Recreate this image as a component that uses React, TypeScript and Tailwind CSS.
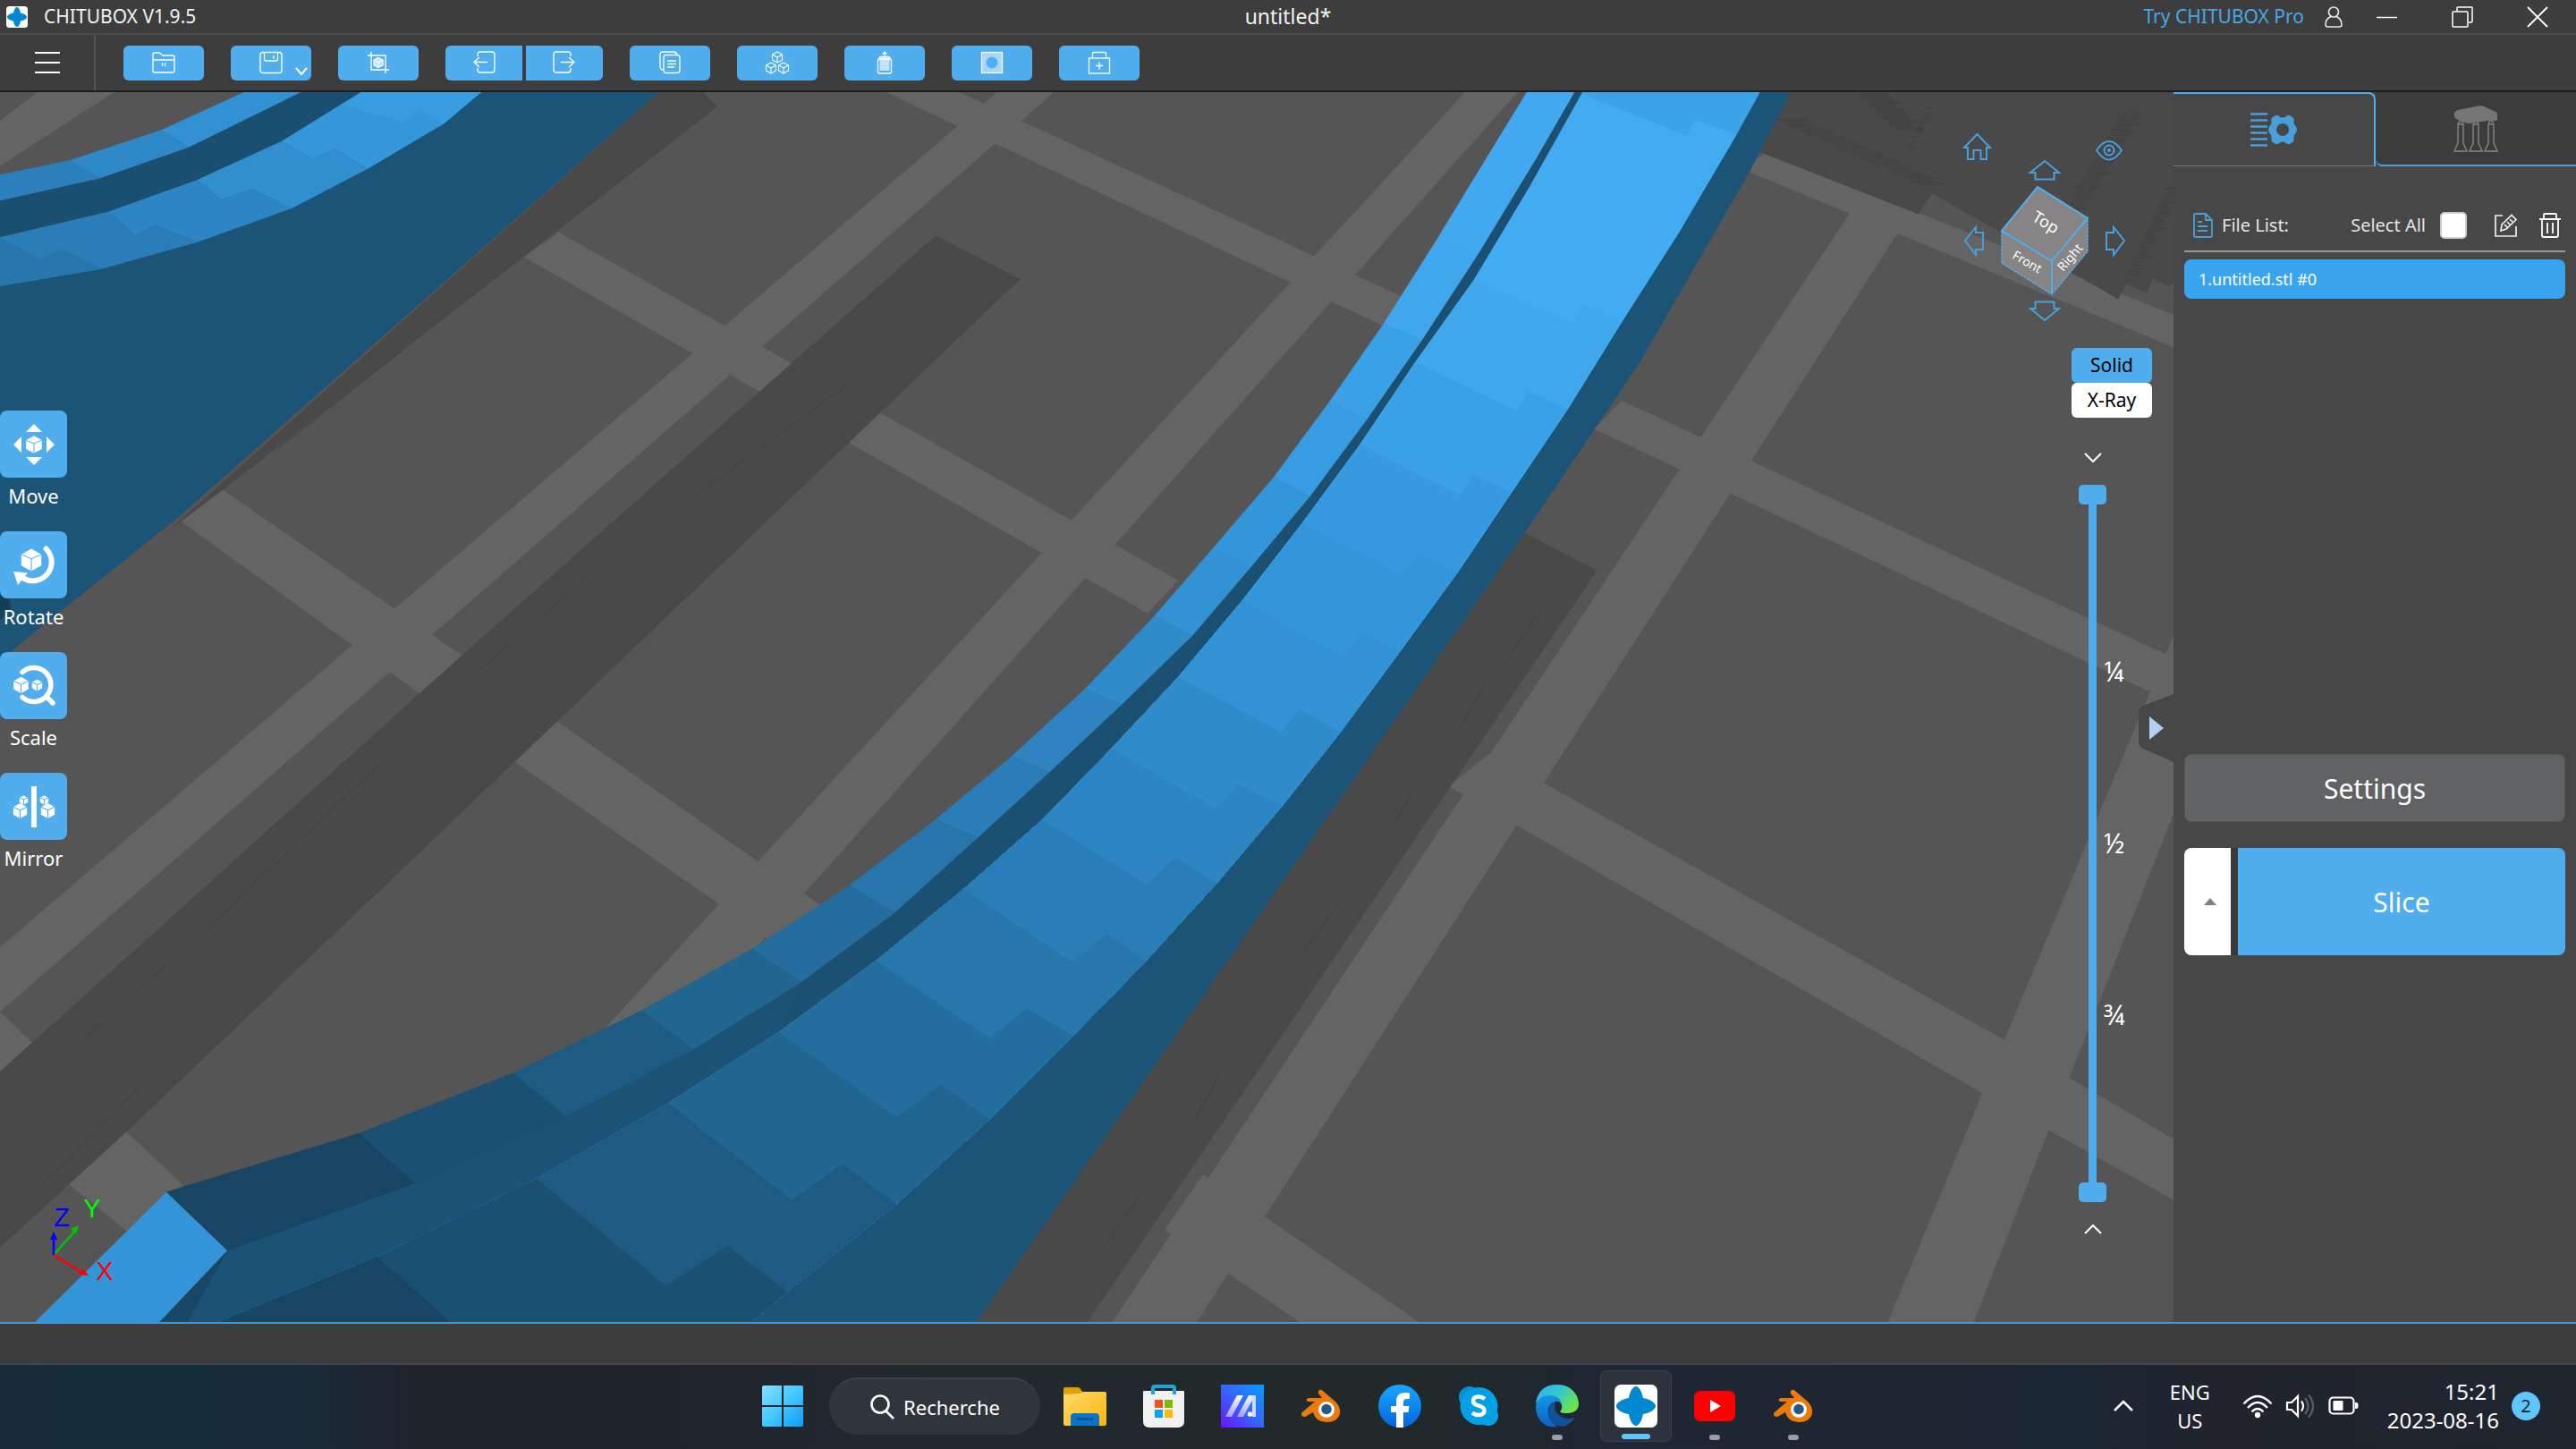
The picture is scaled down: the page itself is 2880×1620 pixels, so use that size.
import React from "react";

type Pt = [number, number];
const pts = (list: Pt[]) => list.map((p) => p.join(",")).join(" ");

/* ---------- 3D scene ---------- */

const floorStrips: Pt[][] = [
  [[30, 0], [86, 0], [0, 97], [0, 40]],
  [[722, 0], [763, 0], [0, 1165], [0, 1083]],
  [[1059, 0], [1097, 0], [437, 1297], [383, 1287]],
  [[1394, 0], [1436, 0], [862, 1560], [801, 1560]],
  [[1568, 690], [1568, 915], [1493, 1247], [1423, 1560], [1361, 1560], [1446, 1200]],
  [[0, 1165], [133, 1385], [133, 1500], [48, 1380], [0, 1310]],
  [[160, 505], [402, 798], [592, 1030], [560, 1080], [520, 1030], [372, 850], [255, 703], [130, 545]],
  [[403, 181], [850, 620], [828, 662], [378, 212]],
  [[687, 0], [1025, 273], [1010, 309], [634, 0]],
  [[1275, 80], [1568, 285], [1568, 326], [1255, 100]],
  [[1170, 393], [1568, 718], [1568, 775], [1150, 429]],
  [[1075, 838], [1446, 1200], [1568, 1325], [1568, 1402], [1430, 1267], [1045, 880]],
  [[868, 1370], [1027, 1560], [941, 1560], [840, 1440]],
];

const shadows: Pt[][] = [
  [[478, 0], [505, 0], [518, 22], [165, 500], [120, 560]],
  [[675, 185], [736, 240], [402, 798], [95, 1310], [0, 1462], [0, 1240], [333, 715]],
  [[1100, 560], [1152, 608], [783, 1560], [700, 1560]],
  [[1290, 0], [1568, 0], [1568, 245], [1565, 249], [1553, 240], [1549, 258], [1534, 246], [1528, 265], [1394, 132], [1384, 158], [1270, 80]],
];

const sideFace: Pt[] = [[1268, 0], [1293, 0], [1262, 105], [1183, 345], [1100, 560], [703, 1560], [500, 1560]];

const outerLeft: Pt[] = [
  [1103, 0], [1075, 80], [1037, 189], [998, 297], [959, 395], [919, 490], [875, 580], [833, 665],
  [783, 757], [730, 842], [675, 922], [613, 1005], [543, 1085], [463, 1163], [370, 1242], [259, 1318], [120, 1392],
];
const outerRight: Pt[] = [
  [1137, 0], [1109, 85], [1066, 209], [1026, 316], [986, 417], [945, 514], [902, 604], [860, 690],
  [809, 777], [757, 862], [705, 945], [645, 1040], [578, 1127], [500, 1212], [408, 1296], [299, 1381], [164, 1466],
];
const outerColors = [
  "#42a9f0", "#42a9f0", "#40a7ed", "#3aa1e6", "#379ce1", "#3496da", "#3292d3",
  "#2f8bca", "#2d84c0", "#2a7db6", "#2775aa", "#246d9e", "#216591", "#1e5b83", "#1b5072", "#184563",
];

const innerLeft: Pt[] = [
  [1143, 0], [1103, 125], [1063, 242], [1021, 345], [981, 449], [939, 549], [896, 646], [850, 742], [802, 832], [752, 922],
  [695, 1010], [632, 1100], [562, 1190], [482, 1280], [387, 1375], [272, 1474], [152, 1560],
];
const innerRight: Pt[] = [
  [1271, 0], [1253, 57], [1212, 179], [1170, 294], [1131, 404], [1091, 508], [1052, 609], [1010, 710], [967, 812],
  [925, 905], [878, 1002], [827, 1100], [774, 1195], [714, 1300], [647, 1407], [568, 1518], [540, 1560],
];
const treads: { edge: Pt[]; fill: string }[] = [
  { edge: [[1141, 6], [1217, 59], [1223, 39], [1253, 57]], fill: "#42aaf1" },
  { edge: [[1103, 125], [1173, 180], [1181, 160], [1212, 179]], fill: "#43abf2" },
  { edge: [[1063, 242], [1135, 296], [1142, 272], [1170, 294]], fill: "#40a7ed" },
  { edge: [[1021, 345], [1094, 406], [1102, 382], [1131, 404]], fill: "#3aa1e6" },
  { edge: [[981, 449], [1053, 512], [1063, 487], [1091, 508]], fill: "#379ae0" },
  { edge: [[939, 549], [1011, 613], [1023, 587], [1052, 609]], fill: "#3496da" },
  { edge: [[896, 646], [968, 716], [983, 684], [1010, 710]], fill: "#3292d3" },
  { edge: [[850, 742], [924, 812], [938, 783], [967, 812]], fill: "#2f8bca" },
  { edge: [[802, 832], [877, 908], [893, 877], [925, 905]], fill: "#2d85c2" },
  { edge: [[752, 922], [827, 1004], [848, 970], [878, 1002]], fill: "#2a7eb8" },
  { edge: [[695, 1010], [773, 1102], [799, 1067], [827, 1100]], fill: "#2777ad" },
  { edge: [[632, 1100], [714, 1198], [741, 1160], [774, 1195]], fill: "#246e9f" },
  { edge: [[562, 1190], [647, 1298], [679, 1256], [714, 1300]], fill: "#216591" },
  { edge: [[482, 1280], [571, 1402], [608, 1357], [647, 1407]], fill: "#1e5a82" },
  { edge: [[387, 1375], [480, 1510], [525, 1460], [568, 1518]], fill: "#1b5071" },
];

/* Rows of short strokes that make up the hatched shadow edges. */
const hatches = [
  { x: 1279, y: 38, dx: 3.1, dy: 2.5, n: 34, w: 24 },
  { x: 1341, y: 6, dx: 1.1, dy: 2, n: 24, w: 22 },
  { x: 1388, y: 24, dx: -0.8, dy: 3, n: 18, w: 7 },
  { x: 1530, y: 30, dx: -0.9, dy: 2.6, n: 48, w: 17 },
  { x: 1562, y: 125, dx: -0.8, dy: 3, n: 38, w: 12 },
];

function Scene() {
  return (
    <svg className="absolute inset-0 h-full w-full" viewBox="0 4 1568 1552" preserveAspectRatio="none" aria-hidden="true">
      <defs>
        <clipPath id="inner">
          <polygon points={pts([...innerLeft, ...[...innerRight].reverse()])} />
        </clipPath>
      </defs>
      <rect x="0" y="0" width="1568" height="1560" fill="#555555" />
      {floorStrips.map((s, i) => (
        <polygon key={i} points={pts(s)} fill="#646464" />
      ))}
      {shadows.map((s, i) => (
        <polygon key={i} points={pts(s)} fill="#494949" />
      ))}
      <g stroke="#424242" strokeWidth=".7" fill="none">
        <path d="M610 375L500 515M430 605L345 735M275 850L150 1060M130 1090L50 1215M100 1260L30 1385" />
        <path d="M1112 655L1085 725M1072 750L1050 815M1020 885L1005 930M965 1030L940 1090M880 1245L862 1300M825 1390L795 1465" />
        <path d="M290 330L200 455" />
      </g>
      <g stroke="#424242" strokeWidth="1.200">
        {hatches.flatMap((h, k) =>
          Array.from({ length: h.n }, (_, i) => (
            <path key={`${k}-${i}`} d={`M${h.x + i * h.dx + ((i * 7) % 4)} ${h.y + i * h.dy}h${h.w - ((i * 5) % 6)}`} />
          ))
        )}
      </g>

      {/* far ribbon */}
      <polygon points="0,180 0,722 24,687 129,540 478,0 250,0" fill="#1c5477" />
      <polygon points="0,635 6,640 8,655 0,670" fill="#163f5b" />
      <polygon points="0,108 50,90 72,113 0,141" fill="#2b80bb" />
      <polygon points="50,90 116,52 136,74 72,113" fill="#2e88c7" />
      <polygon points="116,52 181,0 222,0 136,74" fill="#3291d2" />
      <polygon points="0,141 72,113 136,74 222,0 264,0 203,66 142,115 78,155 0,187" fill="#1b4f71" />
      <polygon points="0,187 78,155 98,185 112,172 143,193 74,227 0,249" fill="#2a7db6" />
      <polygon points="0,187 28,215 45,202 74,227 0,249" fill="#2876ab" />
      <polygon points="78,155 142,115 160,140 182,126 210,151 143,193 112,172 98,185" fill="#2d86c3" />
      <polygon points="142,115 203,66 225,88 242,76 265,101 210,151 182,126 160,140" fill="#318fd0" />
      <polygon points="203,66 264,0 350,0 320,44 265,101 242,76 225,88" fill="#3597da" />
      <polygon points="248,20 264,0 350,0 320,44 303,24 290,42" fill="#389ce1" />

      {/* near ribbon */}
      <polygon points={pts(sideFace)} fill="#1c5478" />
      <polygon
        points={pts([...outerRight, [115, 1560], [152, 1560], ...[...innerLeft].reverse()])}
        fill="#1b5072"
      />
      <polygon points="164,1466 299,1381 408,1296 500,1212 578,1127 562,1190 482,1280 387,1375 272,1474 152,1560 132,1560" fill="#1c5276" />
      {outerLeft.slice(0, -1).map((p, i) => (
        <polygon
          key={i}
          points={pts([p, outerRight[i], outerRight[i + 1], outerLeft[i + 1]])}
          fill={outerColors[i]}
          stroke={outerColors[i]}
          strokeWidth="0.5"
        />
      ))}
      <g clipPath="url(#inner)">
        <rect width="1568" height="1560" fill="#3ca3e8" />
        {treads.map(({ edge, fill }, i) => (
          <polygon
            key={i}
            points={pts([[0, edge[0][1]], ...edge, [1568, edge[3][1]], [1568, 1560], [0, 1560]])}
            fill={fill}
          />
        ))}
        <polygon points="272,1474 328,1560 100,1560 100,1474" fill="#184564" />
      </g>
      <polygon points="23,1560 120,1392 164,1466 113,1560" fill="#3394d8" />
      <polygon points="113,1560 164,1466 134,1560" fill="#184664" />
    </svg>
  );
}

/* ---------- small icons ---------- */

function Brand({ className }: { className?: string }) {
  return (
    <svg viewBox="0 0 48 48" className={className} aria-hidden="true">
      <rect width="48" height="48" rx="7" fill="#fff" />
      <path d="M24 2c4 0 7 7 8 13 7 1 14 5 14 9s-7 8-14 9c-1 6-4 13-8 13s-7-7-8-13C9 32 2 28 2 24s7-8 14-9c1-6 4-13 8-13z" fill="#0288d1" />
    </svg>
  );
}

function Cube({ x, y, s, line = "#50aeee" }: { x: number; y: number; s: number; line?: string }) {
  return (
    <g transform={`translate(${x} ${y}) scale(${s})`}>
      <path d="M0-10L9-5V5L0 10L-9 5V-5Z" fill="#fff" />
      <path d="M-9-5L0-1L9-5M0-1V10" stroke={line} strokeWidth={1 / s} fill="none" />
    </g>
  );
}

function WireCube({ x, y }: { x: number; y: number }) {
  return <path transform={`translate(${x} ${y})`} d="M0-6L5.500-3V3L0 6L-5.500 3V-3ZM-5.500-3L0 0L5.500-3M0 0V6" />;
}

const line = { fill: "none", stroke: "#fff", strokeWidth: 1.3 } as const;

const toolIcons: Record<string, React.ReactNode> = {
  Open: (
    <g {...line}>
      <path d="M4 27V7q0-2 2-2h5l4 3h11q2 0 2 2v15q0 2-2 2H6q-2 0-2-2zM4 13h24M14.500 16v4M17.500 16v4" />
    </g>
  ),
  Save: (
    <g {...line}>
      <rect x="4" y="4.500" width="24" height="23" rx="3" />
      <path d="M8.500 5v7q0 2 2 2h11q2 0 2-2V5M19 8v4" />
    </g>
  ),
  Layout: (
    <g {...line}>
      <path d="M4 8h20v20M8 4v20h20" />
      <path d="M16 10.500l5 2.700v5.600l-5 2.700-5-2.700v-5.600z" fill="#fff" fillOpacity=".65" />
      <path d="M11 13.200l5 2.700 5-2.700M16 16v5" strokeWidth=".8" />
    </g>
  ),
  Undo: (
    <g {...line}>
      <path d="M9 9V7q0-3 3-3h13q3 0 3 3v17q0 3-3 3H12q-3 0-3-3v-2M20 15.500H5M11 10l-6 5.500 6 5.500" />
    </g>
  ),
  Redo: (
    <g {...line}>
      <path d="M23 9V7q0-3-3-3H7Q4 4 4 7v17q0 3 3 3h13q3 0 3-3v-2M12 15.500h15M21 10l6 5.500-6 5.500" />
    </g>
  ),
  Clone: (
    <g {...line}>
      <rect x="9" y="7.500" width="18" height="20" rx="3" />
      <path d="M9 24q-4 0-4-4V7q0-3 3-3h12q3 0 4 3M13 14h10M13 17.500h10M13 21h8" />
    </g>
  ),
  Arrange: (
    <g {...line} strokeWidth={1.1}>
      <WireCube x={16} y={10} />
      <WireCube x={9} y={22} />
      <WireCube x={23} y={22} />
    </g>
  ),
  Hollow: (
    <g {...line}>
      <rect x="8.500" y="12" width="15" height="16" rx="2" />
      <rect x="10.500" y="10" width="11" height="15" fill="#fff" fillOpacity=".65" stroke="none" />
      <path d="M10 12q0-2.500 2-2.500h8q2 0 2 2.500M16 10V4M13.500 6.500L16 4l2.500 2.500" />
    </g>
  ),
  Dig: (
    <g>
      <rect x="4.500" y="4.500" width="23" height="23" fill="#fff" fillOpacity=".5" stroke="#fff" strokeWidth="1.300" />
      <circle cx="16" cy="16" r="6.500" fill="#50aeee" />
    </g>
  ),
  Repair: (
    <g {...line}>
      <rect x="4.500" y="11" width="23" height="17" />
      <path d="M8.500 11V5.500q0-1 1-1h13q1 0 1 1V11M16 15.500v8M12 19.500h8" />
    </g>
  ),
};

function ToolIcon({ name }: { name: string }) {
  return (
    <svg viewBox="0 0 32 32" className="size-8" aria-hidden="true">
      {toolIcons[name]}
    </svg>
  );
}

const toolButton = "relative flex h-[39px] items-center justify-center bg-[#50aeee]";

function Toolbar() {
  return (
    <div className="flex h-16 items-stretch bg-[#3d3d3d] border-b-2 border-[#1d1d1f]">
      <button aria-label="Menu" className="flex w-[107px] items-center justify-center border-r-2 border-[#555]">
        <svg viewBox="0 0 28 26" className="h-[26px] w-7" aria-hidden="true">
          <path d="M0 2h28M0 13h28M0 24h28" stroke="#fff" strokeWidth="2" />
        </svg>
      </button>
      <div className="flex items-center gap-[30px] pl-[31px]">
        {["Open", "Save", "Layout"].map((n) => (
          <button key={n} aria-label={n} className={`${toolButton} w-[90px] rounded-md`}>
            <ToolIcon name={n} />
            {n === "Save" && (
              <svg viewBox="0 0 14 9" className="absolute right-1 bottom-1.5 h-[9px] w-3.5" aria-hidden="true">
                <path d="M1 1l6 7 6-7" fill="none" stroke="#fff" strokeWidth="2" />
              </svg>
            )}
          </button>
        ))}
        <div className="flex gap-1">
          <button aria-label="Undo" className={`${toolButton} w-[86px] rounded-l-md`}>
            <ToolIcon name="Undo" />
          </button>
          <button aria-label="Redo" className={`${toolButton} w-[86px] rounded-r-md`}>
            <ToolIcon name="Redo" />
          </button>
        </div>
        {["Clone", "Arrange", "Hollow", "Dig", "Repair"].map((n) => (
          <button key={n} aria-label={n} className={`${toolButton} w-[90px] rounded-md`}>
            <ToolIcon name={n} />
          </button>
        ))}
      </div>
    </div>
  );
}

function TitleBar() {
  return (
    <header className="grid h-[39px] grid-cols-[1fr_auto_1fr] items-center border-b-2 border-[#4a4a4a] bg-[#3d3d3d] text-[21px] text-[#f2f2f2]">
      <div className="flex items-center gap-[18px] pl-[7px]">
        <Brand className="size-6" />
        <span>CHITUBOX V1.9.5</span>
      </div>
      <h1 className="text-[23px]">untitled*</h1>
      <div className="flex items-center justify-end pr-[31px]">
        <a href="#pro" className="text-[#4ba6e4]">Try CHITUBOX Pro</a>
        <button aria-label="Account" className="ml-[22px]">
          <svg viewBox="0 0 22 24" className="h-6 w-[22px]" fill="none" stroke="#e8e8e8" strokeWidth="1.600" aria-hidden="true">
            <ellipse cx="11" cy="6.500" rx="5.500" ry="5.500" />
            <path d="M8 11.500q-6 2.500-6 9 0 2.500 2.500 2.500h13q2.500 0 2.500-2.500 0-6.500-6-9" />
          </svg>
        </button>
        <button aria-label="Minimize" className="ml-[37px]">
          <svg viewBox="0 0 24 24" className="size-6" aria-hidden="true">
            <path d="M0 12.500h23" stroke="#fff" strokeWidth="1.500" />
          </svg>
        </button>
        <button aria-label="Restore" className="ml-[60px]">
          <svg viewBox="0 0 24 24" className="size-6" fill="none" stroke="#fff" strokeWidth="1.500" aria-hidden="true">
            <rect x="1" y="6" width="17" height="17" rx="1" />
            <path d="M6 5.500V2q0-1 1-1h15q1 0 1 1v15q0 1-1 1h-3" />
          </svg>
        </button>
        <button aria-label="Close" className="ml-[60px]">
          <svg viewBox="0 0 24 24" className="size-6" aria-hidden="true">
            <path d="M1 1l22 22M23 1L1 23" stroke="#fff" strokeWidth="1.800" />
          </svg>
        </button>
      </div>
    </header>
  );
}

/* ---------- viewport overlays ---------- */

const transforms: { name: string; icon: React.ReactNode }[] = [
  {
    name: "Move",
    icon: (
      <>
        <path d="M38 15l9 9H29zM38 61l9-9H29zM15 38l9-9v18zM61 38l-9-9v18z" fill="#fff" />
        <Cube x={38} y={38} s={0.98} />
      </>
    ),
  },
  {
    name: "Rotate",
    icon: (
      <>
        <path d="M51.500 19.500A21 21 0 0 1 27 53" fill="none" stroke="#fff" strokeWidth="6" strokeLinecap="round" />
        <path d="M15 45l16 1.500-11 13.500z" fill="#fff" />
        <Cube x={35} y={32} s={1.25} />
      </>
    ),
  },
  {
    name: "Scale",
    icon: (
      <>
        <path d="M25 22.500A19 19 0 1 1 25 50.500M52 50l7 7" fill="none" stroke="#fff" strokeWidth="5.500" strokeLinecap="round" />
        <Cube x={23.500} y={37} s={0.92} />
        <Cube x={41.500} y={37} s={0.64} />
      </>
    ),
  },
  {
    name: "Mirror",
    icon: (
      <>
        <rect x="35" y="15" width="6" height="46" fill="#fff" />
        <Cube x={26.500} y={30.500} s={0.52} />
        <Cube x={49.500} y={30.500} s={0.52} />
        <Cube x={22.500} y={42.500} s={0.85} />
        <Cube x={53.500} y={42.500} s={0.85} />
      </>
    ),
  },
];

function TransformTools() {
  return (
    <nav aria-label="Transform" className="absolute top-[356px] left-0 flex flex-col">
      {transforms.map(({ name, icon }) => (
        <button key={name} className="flex h-[135px] w-[75px] flex-col items-center gap-1 text-[22px] leading-8 text-white">
          <span className="size-[75px] rounded-lg bg-[#50aeee]">
            <svg viewBox="0 0 75 75" aria-hidden="true">{icon}</svg>
          </span>
          {name}
        </button>
      ))}
    </nav>
  );
}

function ViewCube() {
  return (
    <svg viewBox="2190 140 190 230" className="absolute top-[37px] right-[50px] h-[230px] w-[190px]" role="img" aria-label="View cube">
      <g fill="none" stroke="#4a9fdb" strokeWidth="2">
        <path d="M2196 165l14.500-15 14.500 15h-4v13h-6.500v-10h-8v10h-6.500v-13z" />
        <path d="M2344 168q7-10 14-10t14 10q-7 10.500-14 10.500T2344 168z" />
        <circle cx="2358" cy="168" r="5.500" />
        <circle cx="2358" cy="168" r="1" />
        <path d="M2286 180l16 13h-5.500v7.500h-21V193h-5.500z" />
        <path d="M2286 358l16-13h-5.500v-7.500h-21v7.500h-5.500z" />
        <path d="M2197 269l12-15v6h8v19h-8v6z" />
        <path d="M2375 269l-12-15v6h-8v19h8v6z" />
      </g>
      <path d="M2278 209L2334 244V281L2294 329L2238 294V258Z" fill="#868484" stroke="#50aeee" strokeWidth="1.500" strokeDasharray="3 1" />
      <path d="M2278 209L2334 244L2294 292L2238 258ZM2294 292V329" fill="none" stroke="#50aeee" strokeWidth="2" />
      <g fill="#fff" textAnchor="middle">
        <text fontSize="18" transform="translate(2284 254) rotate(31)">Top</text>
        <text fontSize="14" transform="translate(2264 297) rotate(30)">Front</text>
        <text fontSize="14" transform="translate(2318 291) rotate(-50)">Right</text>
      </g>
    </svg>
  );
}

function Chevron({ up }: { up?: boolean }) {
  return (
    <svg viewBox="0 0 20 12" className="h-3 w-5" aria-hidden="true">
      <path d={up ? "M1 11l9-9 9 9" : "M1 1l9 9 9-9"} fill="none" stroke="#fff" strokeWidth="2" />
    </svg>
  );
}

function LayerSlider() {
  return (
    <div className="absolute top-[403px] right-[54px] bottom-[98px] flex w-[52px] flex-col">
      <button aria-label="Layer down" className="flex w-[31px] justify-center"><Chevron /></button>
      <div className="relative mt-6 mb-6 flex-1">
        <div className="flex h-full w-[31px] flex-col items-center">
          <span className="h-[22px] w-[31px] rounded-[5px] bg-[#50aeee]" />
          <span className="w-[9px] flex-1 bg-[#50aeee]" />
          <span className="h-[22px] w-[31px] rounded-[5px] bg-[#50aeee]" />
        </div>
        <input type="range" aria-label="Upper layer" className="absolute top-0 left-0 h-1/2 w-[31px] opacity-0 [writing-mode:vertical-lr]" />
        <input type="range" aria-label="Lower layer" className="absolute bottom-0 left-0 h-1/2 w-[31px] opacity-0 [writing-mode:vertical-lr]" />
        <div className="pointer-events-none absolute inset-y-0 left-7 flex flex-col justify-center gap-[156px] text-[30px] leading-9 text-white">
          <span>¼</span>
          <span>½</span>
          <span>¾</span>
        </div>
      </div>
      <button aria-label="Layer up" className="flex w-[31px] justify-center"><Chevron up /></button>
    </div>
  );
}

function Axes() {
  return (
    <svg viewBox="40 1330 100 110" className="absolute bottom-[39px] left-10 h-[110px] w-[100px] font-['Liberation_Sans',sans-serif]" role="img" aria-label="Axes">
      <path d="M60 1404L84 1377" stroke="#00c800" strokeWidth="2.500" />
      <path d="M88 1371l-9 4 6 6z" fill="#00c800" />
      <path d="M60 1404V1385" stroke="#0000ff" strokeWidth="2.500" />
      <path d="M60 1378l4 9h-8z" fill="#0000ff" />
      <path d="M60 1404L92 1424" stroke="#ff0000" strokeWidth="2.500" />
      <path d="M99 1427l-11-1 5-7z" fill="#ff0000" />
      <g fontSize="29" textAnchor="middle">
        <text x="69" y="1372" fill="#0000ff">Z</text>
        <text x="103" y="1362" fill="#00ff00">Y</text>
        <text x="117" y="1432" fill="#ff0000">X</text>
      </g>
    </svg>
  );
}

function Viewport() {
  return (
    <main className="relative flex-1 overflow-hidden">
      <Scene />
      <TransformTools />
      <ViewCube />
      <div className="absolute top-[286px] right-6 flex w-[90px] flex-col text-[21px] text-black">
        <button className="h-[39px] rounded-md bg-[#50aeee]">Solid</button>
        <button className="h-[39px] rounded-md bg-white">X-Ray</button>
      </div>
      <LayerSlider />
      <Axes />
      <button aria-label="Collapse panel" className="absolute top-[673px] right-0 h-[76px] w-10">
        <svg viewBox="0 0 40 76" className="h-full w-full" aria-hidden="true">
          <path d="M40 0V76L6 61Q1 58 1 54V20Q1 16 6 13Z" fill="#474747" />
          <path d="M13 25L29 38L13 51Z" fill="#b4cff2" />
        </svg>
      </button>
    </main>
  );
}

/* ---------- right panel ---------- */

function SettingsTabIcon() {
  return (
    <svg viewBox="0 0 52 40" className="h-10 w-[52px]" aria-hidden="true">
      <path d="M0 2.500h19M0 9.500h19M0 16.500h19M0 23.500h19M0 30.500h19M0 37.500h19" stroke="#4a9fdb" strokeWidth="2.500" />
      <path
        fillRule="evenodd"
        fill="#4a9fdb"
        d="M28 4q2-1 4 1 4 3 8 0 2-2 4-1l3 2q2 1 1.500 3.500Q48 14 50.500 16q1.500 2 1.500 4t-1.500 4q-2.500 2-2 6.500Q49 33 47 34l-3 2q-2 1-4-1-4-3-8 0-2 2-4 1l-3-2q-2-1-1.500-3.500Q24 26 21.500 24 20 22 20 20t1.500-4q2.500-2 2-6.500Q23 7 25 6zM36 13a7 7 0 1 0 .1 0z"
      />
    </svg>
  );
}

function SupportTabIcon() {
  return (
    <svg viewBox="0 0 50 52" className="h-[52px] w-[50px]" aria-hidden="true">
      <path d="M1 9q0-3 4-4L30 0q2 0 4 1l13 6q2 1 2 3v5q0 2-3 2l-8 0-20 3q-3 0-5-1L3 15q-2-1-2-3z" fill="#767676" />
      <g fill="none" stroke="#767676" strokeWidth="1.800">
        {[0, 17, 34].map((x) => (
          <path key={x} transform={`translate(${x} 0)`} d="M8 15L5 21V42L1 51H15L11 42V21ZM5 21h6" />
        ))}
      </g>
    </svg>
  );
}

function SidePanel() {
  return (
    <aside className="flex w-[450px] flex-col bg-[#474747]">
      <div role="tablist" className="flex h-[83px]">
        <button role="tab" aria-selected="true" aria-label="Settings" className="flex flex-1 items-center justify-center rounded-tr-lg border-t-2 border-r-2 border-b border-t-[#50aeee] border-r-[#50aeee] border-b-[#777]">
          <SettingsTabIcon />
        </button>
        <button role="tab" aria-selected="false" aria-label="Supports" className="flex flex-1 items-center justify-center rounded-bl-lg border-b-2 border-[#4a9fdb] bg-[#3b3b3b]">
          <SupportTabIcon />
        </button>
      </div>
      <div className="flex flex-1 flex-col px-3">
        <div className="mt-[38px] flex h-[58px] items-center border-b-2 border-[#9a9a9a] text-[20px] text-[#e4e4e4]">
          <svg viewBox="0 0 22 28" className="ml-2.5 h-7 w-[22px]" fill="none" stroke="#4a9fdb" strokeWidth="1.800" aria-hidden="true">
            <path d="M14 1H3Q1 1 1 3v22q0 2 2 2h16q2 0 2-2V8zM14 1v7h7M5 10h5M5 15h11M5 20h11" />
          </svg>
          <span className="ml-2.5">File List:</span>
          <label htmlFor="select-all" className="ml-auto">Select All</label>
          <input id="select-all" type="checkbox" className="ml-4 size-[30px] appearance-none rounded-[5px] border-2 border-[#ccc] bg-white" />
          <button aria-label="Edit" className="ml-[31px]">
            <svg viewBox="0 0 26 26" className="size-[26px]" fill="none" stroke="#eee" strokeWidth="1.700" aria-hidden="true">
              <path d="M9 2H1v23h23V14" />
              <path d="M8 12L19 1.500l5 5L13 17l-6 2zM11 12l3 3M14 9l3 3M17 6l3 3" />
            </svg>
          </button>
          <button aria-label="Delete" className="mr-1 ml-[23px]">
            <svg viewBox="0 0 26 28" className="h-7 w-[26px]" fill="none" stroke="#fff" strokeWidth="1.800" aria-hidden="true">
              <path d="M1 7h24M6 7V2q0-1 1-1h12q1 0 1 1v5M4 7v18q0 2 2 2h14q2 0 2-2V7M10 11v12M16 11v12" />
            </svg>
          </button>
        </div>
        <ul className="mt-2">
          <li>
            <button className="h-11 w-full rounded-lg bg-[#3aa5ee] px-4 text-left text-[18px] text-white">1.untitled.stl #0</button>
          </li>
        </ul>
        <button className="mt-[509px] h-[76px] rounded-lg border border-[#565856] bg-[#606264] text-[30px] text-white">Settings</button>
        <div className="mt-[29px] flex h-[120px] overflow-hidden rounded-lg bg-[#3b3b3b]">
          <button aria-label="Slice options" className="flex w-[52px] items-center justify-center bg-white">
            <svg viewBox="0 0 14 8" className="ml-1.5 h-2 w-3.5" aria-hidden="true">
              <path d="M0 8L7 0l7 8z" fill="#808080" />
            </svg>
          </button>
          <button className="ml-2 flex-1 bg-[#50aeee] text-[30px] text-white">Slice</button>
        </div>
      </div>
    </aside>
  );
}

/* ---------- taskbar ---------- */

function Blender() {
  return (
    <svg viewBox="0 0 48 48" className="size-12" aria-hidden="true">
      <path d="M22 6q2-1 4 1l14 12q6 6 5 13-2 10-15 10-12 0-15-11L6 36q-4 0-4-3 0-2 2-3l13-11H9q-2-1-1-3 1-1 3-1h14l-4-5q-1-2 1-4z" fill="#ec7a08" />
      <circle cx="30" cy="28" r="9" fill="#fff" />
      <circle cx="30" cy="27.500" r="5.800" fill="#265787" />
    </svg>
  );
}

const apps: { name: string; state?: "open" | "active"; icon: React.ReactNode }[] = [
  {
    name: "Explorer",
    icon: (
      <svg viewBox="0 0 48 48" className="size-12" aria-hidden="true">
        <defs>
          <linearGradient id="fold" x1="0" y1="0" x2="1" y2="1"><stop stopColor="#ffdb70" /><stop offset="1" stopColor="#fbb606" /></linearGradient>
        </defs>
        <path d="M0 5q0-2 2-2h14q2 0 3 2l3 4v4H0z" fill="#dfa004" />
        <path d="M0 11l18-1 4-2h24q2 0 2 2v34q0 2-2 2H2q-2 0-2-2z" fill="url(#fold)" />
        <path d="M8 46V36q0-4 4-4h24q4 0 4 4v10z" fill="#0b74c8" />
        <path d="M15 38.500h18" stroke="#07498a" strokeWidth="2" />
      </svg>
    ),
  },
  {
    name: "Store",
    icon: (
      <svg viewBox="0 0 48 48" className="size-12" aria-hidden="true">
        <path d="M1 8q0-1 1-1h44q1 0 1 1v33q0 7-7 7H8q-7 0-7-7z" fill="#f1f1f1" />
        <path d="M12 11V4q0-2 2-2h20q2 0 2 2v7" fill="none" stroke="#1ca6dd" strokeWidth="4" />
        <path d="M14 17h9v9h-9z" fill="#f25022" />
        <path d="M25 17h9v9h-9z" fill="#7fba00" />
        <path d="M14 28h9v9h-9z" fill="#00a4ef" />
        <path d="M25 28h9v9h-9z" fill="#ffb900" />
      </svg>
    ),
  },
  {
    name: "MSI",
    icon: (
      <svg viewBox="0 0 48 48" className="size-12" aria-hidden="true">
        <defs>
          <linearGradient id="ma" x1="0" y1="1" x2="1" y2="0"><stop stopColor="#6a12ff" /><stop offset=".5" stopColor="#3366ff" /><stop offset="1" stopColor="#0a9cff" /></linearGradient>
          <linearGradient id="mb" x1="0" y1="1" x2="0" y2="0"><stop stopColor="#a89cff" /><stop offset="1" stopColor="#fff" /></linearGradient>
        </defs>
        <rect width="48" height="48" fill="url(#ma)" />
        <path d="M5 36L18 12h7L12 36zM18 36L31 12h7L25 36z" fill="url(#mb)" />
        <path d="M33 12h6v24h-4V20z" fill="#cfdcff" />
        <circle cx="32.500" cy="33" r="2.800" fill="#fff" />
      </svg>
    ),
  },
  { name: "Blender", icon: <Blender /> },
  {
    name: "Facebook",
    icon: (
      <svg viewBox="0 0 48 48" className="size-12" aria-hidden="true">
        <defs>
          <linearGradient id="fb" x1="0" y1="0" x2="0" y2="1"><stop stopColor="#18a8fe" /><stop offset="1" stopColor="#0464e2" /></linearGradient>
        </defs>
        <circle cx="24" cy="24" r="24" fill="url(#fb)" />
        <path d="M20 48V31h-6v-7h6v-5q0-10 9-10 3 0 6 .6V16h-3q-4 0-4 4v4h6.500l-1 7H28v17q-4 .600-8 0z" fill="#fff" />
      </svg>
    ),
  },
  {
    name: "Skype",
    icon: (
      <svg viewBox="0 0 48 48" className="size-12" aria-hidden="true">
        <circle cx="14" cy="14" r="12" fill="#0a8fd6" />
        <circle cx="35" cy="35" r="11" fill="#0a9fe6" />
        <circle cx="24.500" cy="24" r="21" fill="#03a0e6" />
        <path d="M31 16q-3-2.500-7-2.500-6 0-6 5 0 3.500 6 5t6.500 5q0 5.500-6.500 5.500-4 0-7-2.500" fill="none" stroke="#fff" strokeWidth="4.500" />
      </svg>
    ),
  },
  {
    name: "Edge",
    state: "open",
    icon: (
      <svg viewBox="0 0 48 48" className="size-12" aria-hidden="true">
        <defs>
          <linearGradient id="ea" x1="0" y1="0" x2="1" y2=".6"><stop stopColor="#2fb0f5" /><stop offset=".5" stopColor="#33c7d0" /><stop offset="1" stopColor="#6be64a" /></linearGradient>
          <linearGradient id="eb" x1="0" y1="0" x2="0" y2="1"><stop stopColor="#1495e6" /><stop offset="1" stopColor="#0b63c0" /></linearGradient>
        </defs>
        <path d="M0 21Q3 0 24 0q15 0 22 13 4 9 0 15-4 4-11 4-7 0-8-2 3-3 2-7-2-8-13-8Q6 15 0 21z" fill="url(#ea)" />
        <path d="M0 24Q3 12 15 12q13 0 14 11-2-5-7-4-6 1-8 8-2 12 10 20Q12 49 5 40 0 34 0 24z" fill="url(#eb)" />
        <path d="M22 19q-8 3-8 12 0 14 16 16 9-2 14-11-6 4-13 1-9-4-10-11 0-4 1-7z" fill="#12509c" />
      </svg>
    ),
  },
  { name: "CHITUBOX", state: "active", icon: <Brand className="size-12" /> },
  {
    name: "YouTube",
    state: "open",
    icon: (
      <svg viewBox="0 0 48 48" className="size-12" aria-hidden="true">
        <rect x="1" y="7" width="46" height="34" rx="7" fill="#ff0000" />
        <path d="M19 17l12 7-12 7z" fill="#fff" />
      </svg>
    ),
  },
  { name: "Blender project", state: "open", icon: <Blender /> },
];

function Taskbar() {
  return (
    <footer className="grid h-24 grid-cols-[1fr_auto_1fr] items-center border-t-2 border-[#41474d] bg-[linear-gradient(90deg,#182b38_0%,#152d39_6%,#192a37_12%,#20242e_16%,#20242e_26%,#22292d_36%,#21292a_55%,#1e2733_62%,#1e2632_76%,#1a2834_80%,#20232d_86%,#1f2630_100%)] pb-0.5 text-white">
      <div />
      <div className="flex items-center">
        <button aria-label="Start" className="flex size-20 items-center justify-center">
          <svg viewBox="0 0 46 46" className="size-[46px]" aria-hidden="true">
            <defs>
              <linearGradient id="win" x1="0" y1="0" x2="1" y2="1"><stop stopColor="#86e0fd" /><stop offset=".5" stopColor="#44c8ff" /><stop offset="1" stopColor="#0a9bff" /></linearGradient>
            </defs>
            <path d="M2 0h20v22H0V2q0-2 2-2zM24 0h20q2 0 2 2v20H24zM0 24h22v22H2q-2 0-2-2zM24 24h22v20q0 2-2 2H24z" fill="url(#win)" />
          </svg>
        </button>
        <button className="mr-2.5 ml-3 flex h-16 w-[236px] items-center justify-center gap-2.5 rounded-full border-t-2 border-[#3a4347] bg-[#2e363c] text-[22px]">
          <svg viewBox="0 0 28 28" className="size-7" fill="none" stroke="#fff" strokeWidth="2.600" aria-hidden="true">
            <circle cx="12" cy="11" r="9.500" />
            <path d="M18.500 18.500L27 27" />
          </svg>
          Recherche
        </button>
        <div className="flex gap-2">
          {apps.map(({ name, state, icon }) => (
            <button
              key={name}
              aria-label={name}
              className={`relative flex size-20 items-center justify-center rounded-lg ${state === "active" ? "border border-[#3a4149] bg-[#2d333d]" : ""}`}
            >
              {icon}
              {state === "open" && <span className="absolute bottom-0.5 h-1.5 w-3 rounded-full bg-[#9b9da2]" />}
              {state === "active" && <span className="absolute bottom-0.5 h-1.5 w-8 rounded-full bg-[#5fc5fb]" />}
            </button>
          ))}
        </div>
      </div>
      <div className="flex items-center justify-end pr-10 text-[22px]">
        <button aria-label="Hidden icons">
          <svg viewBox="0 0 24 14" className="h-3.5 w-6" aria-hidden="true">
            <path d="M2 12L12 2l10 10" fill="none" stroke="#fff" strokeWidth="2.500" />
          </svg>
        </button>
        <button className="ml-10 text-center leading-8">ENG<br />US</button>
        <svg viewBox="0 0 34 28" className="ml-9 h-7 w-[34px]" fill="none" stroke="#fff" strokeWidth="2.300" aria-hidden="true">
          <path d="M1.500 11.500q15.500-17 31 0M6 16q11-12 22 0M10.500 20.500q6.500-7 13 0" />
          <circle cx="17" cy="24" r="2" fill="#fff" />
        </svg>
        <svg viewBox="0 0 34 28" className="ml-3.5 h-7 w-[34px]" fill="none" stroke="#fff" strokeWidth="2.200" aria-hidden="true">
          <path d="M2 10h5l7-7v22l-7-7H2zM18 8.500q4 5.500 0 11" />
          <path d="M22 5q7 9 0 18M26 1.500q10 12.500 0 25" stroke="#5a5e66" />
        </svg>
        <svg viewBox="0 0 34 24" className="ml-3.5 h-6 w-[34px]" aria-hidden="true">
          <rect x="1.500" y="2.500" width="27" height="18" rx="4" fill="none" stroke="#fff" strokeWidth="2.200" />
          <rect x="5.500" y="6" width="11" height="11" rx="1" fill="#fff" />
          <path d="M30 8h1.500q2 0 2 2v3q0 2-2 2H30z" fill="#fff" />
        </svg>
        <button className="ml-8 text-right text-[24px] leading-8">15:21<br />2023-08-16</button>
        <span className="ml-3.5 flex size-8 items-center justify-center rounded-full bg-[#5fc5fb] text-[20px] text-[#1b2733]">2</span>
      </div>
    </footer>
  );
}

export default function App() {
  return (
    <div className="flex min-h-screen flex-col bg-[#3d3d3d] font-['Noto_Sans',sans-serif]">
      <TitleBar />
      <Toolbar />
      <div className="flex flex-1">
        <Viewport />
        <SidePanel />
      </div>
      <div className="h-[46px] border-t-2 border-[#4598d2] bg-[#3c3c3c]" />
      <Taskbar />
    </div>
  );
}
